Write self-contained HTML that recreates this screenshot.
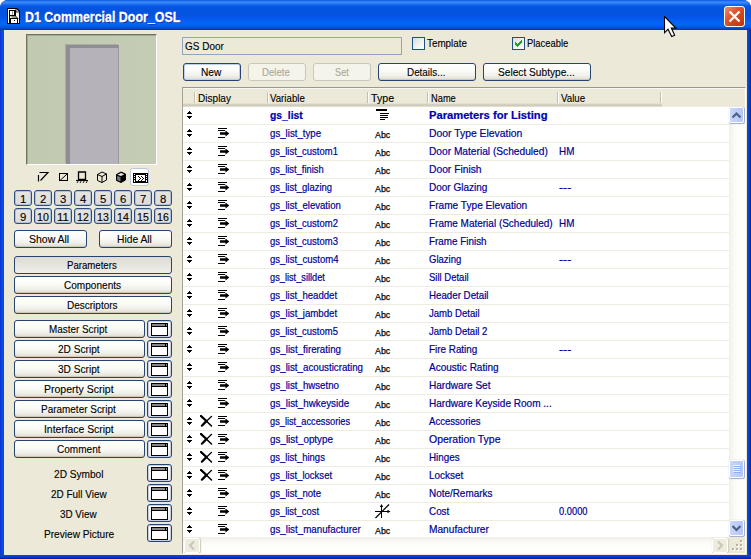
<!DOCTYPE html>
<html><head><meta charset="utf-8"><title>D1 Commercial Door_OSL</title>
<style>
*{box-sizing:border-box;margin:0;padding:0}
html,body{width:751px;height:559px;overflow:hidden;background:#fff}
body{font-family:"Liberation Sans",sans-serif;font-size:11px;color:#000;position:relative}
.a{position:absolute}
.t{position:absolute;white-space:nowrap;line-height:14px;height:14px;transform-origin:0 50%;font-size:10.5px;-webkit-text-stroke:0.12px currentColor}
.nv{-webkit-text-stroke:0.2px currentColor}
.nv{color:#000098}
#win{left:0;top:0;width:751px;height:559px;border-radius:8px 8px 0 0;background:#0A44D0;overflow:hidden}
#title{left:0;top:0;width:751px;height:30px;background:linear-gradient(to bottom,#0A58DA 0,#2573EE 1px,#3C8DF8 2px,#2C7CF4 3.5px,#0F62EE 5px,#0555E0 7px,#0353DE 14px,#0556EA 18px,#0565F4 22px,#0563F2 25px,#0558E4 27px,#0846CC 28.5px,#0432B0 30px)}
#frameL{left:0;top:30px;width:4px;height:529px;background:linear-gradient(to right,#0830CC,#0A48E2 40%,#0A4CE6)}
#frameR{left:747px;top:30px;width:4px;height:529px;background:linear-gradient(to right,#0C50DC,#0840C8 50%,#02259E)}
#frameB{left:0;top:555px;width:751px;height:4px;background:linear-gradient(to bottom,#0A48E2,#0838C8 50%,#02209C)}
#client{left:4px;top:30px;width:743px;height:525px;background:#ECE9D8}
.btn{position:absolute;height:18px;border:1px solid #25446F;border-radius:3px;background:linear-gradient(to bottom,#FFFFFF 0%,#FAFAF7 45%,#F0EFE8 75%,#DEDACC 100%);box-shadow:inset 0 -1px 0 #CDC9BA}
.btn.dis{border-color:#C9C7BA;background:#F5F4EA;box-shadow:none}
.btn.on{background:linear-gradient(to bottom,#DDDBD3 0%,#E5E3DD 45%,#EFEEE9 100%);box-shadow:none}
.nb{position:absolute;width:18px;height:16px;border:1px solid #2E4C7C;border-radius:3px;background:linear-gradient(to bottom,#E6E5E0,#DDDCD6);box-shadow:inset 0 0 0 1px #B4C0D6}
.ib{position:absolute;width:25px;height:18px;border:1px solid #25446F;border-radius:3px;background:linear-gradient(to bottom,#FFFFFF,#ECEADF);box-shadow:inset 0 0 0 1px #C6D0E4}
.ib i{position:absolute;left:3px;top:2px;width:17px;height:13px;border:1px solid #000;background:linear-gradient(to bottom,#858585 0,#858585 2px,#000 2px,#000 3px,#fff 3px)}
.ib b{position:absolute;left:17px;top:3px;width:1px;height:2px;background:#000}
#tbl{left:182px;top:87px;width:564px;height:467px;border-left:1px solid #A5A395;border-top:1px solid #9A988C;border-right:1px solid #fff;border-bottom:1px solid #fff;background:#fff;overflow:hidden}
#hdr{left:0;top:0;width:479px;height:19px;background:linear-gradient(to bottom,#F7F6F0 0,#F7F6F0 1px,#ECE9D8 1px,#ECE9D8 15px,#DDD9C8 16px,#CBC7B8 17px,#D6D2C2 18px,#E8E6DC 19px)}
.hs{position:absolute;top:4px;width:2px;height:11px;border-left:1px solid #C2BFAF;border-right:1px solid #fff}
.rl{position:absolute;left:0;width:546px;height:1px;background:#EDEBE2}
</style></head><body>
<div id="win" class="a">
<div id="title" class="a"></div>
<span class="t" style="left:25px;top:8px;line-height:18px;height:18px;font-size:14.5px;-webkit-text-stroke:0.3px #fff;font-weight:bold;color:#fff;text-shadow:1px 1px 0 #0A2A9A;transform:scaleX(0.8565)">D1 Commercial Door_OSL</span>
<svg class="a" style="left:7px;top:8px" width="13" height="16" viewBox="0 0 13 16"><path d="M0 0H10L13 3V16H0Z" fill="#000"/><path d="M1 1H9.300L12 3.700V15H1Z" fill="#fff"/><path d="M9 1V4H12" fill="none" stroke="#000" stroke-width="0.800"/><g shape-rendering="crispEdges"><rect x="2" y="2" width="7" height="6" fill="#000"/><rect x="3" y="3" width="4" height="4" fill="#fff"/><rect x="5" y="3" width="1" height="4" fill="#999"/><rect x="2" y="8" width="1" height="3" fill="#000"/><rect x="2" y="10" width="9" height="5" fill="#000"/><rect x="4" y="11" width="6" height="4" fill="#fff"/><rect x="7" y="12" width="1" height="1" fill="#000"/></g><path d="M3 8H8L10.500 10H5.500Z" fill="#8C9A84"/><path d="M8 7.500L11 10.500" stroke="#000" stroke-width="0.900"/></svg>
<div class="a" style="left:724px;top:6px;width:21px;height:21px;border:1px solid #fff;border-radius:3px;background:linear-gradient(135deg,#EE8C6E 0%,#E0532C 40%,#CC3F14 75%,#B8340E 100%)"><svg class="a" style="left:3px;top:3px" width="13" height="13" viewBox="0 0 13 13"><path d="M1.5 1.5L11.5 11.5M11.5 1.500L1.500 11.500" stroke="#fff" stroke-width="2.3"/></svg></div>
<div id="client" class="a"></div><div id="frameL" class="a"></div><div id="frameR" class="a"></div><div id="frameB" class="a"></div>
<div class="a" style="left:26px;top:34px;width:131px;height:131px;border:1px solid #6E745E;border-right-color:#fff;border-bottom-color:#fff;background:linear-gradient(to right,#C2C9B1,#C5CCB5);box-shadow:inset 1px 1px 0 #A2A992"><div class="a" style="left:39px;top:10px;width:53px;height:119px;background:#B5B3B9;border-left:4px solid #908E94;border-top:3px solid #908E94;border-right:1px solid #9C9AA0;box-shadow:-1px -1px 0 #A9ABA2"></div></div>
<svg class="a" style="left:36px;top:170px" width="92" height="16" viewBox="0 0 92 16"><path d="M2.500 5V11.500 M3.500 2.500H12 L4.500 10.500" stroke="#000" stroke-width="1.150" fill="none"/><rect x="23.500" y="3.500" width="8" height="7" fill="none" stroke="#000"/><path d="M24 10.500L31 4" stroke="#000"/><path d="M42.500 2V9.500H49.500V2Z" fill="none" stroke="#000" stroke-width="1.300"/><path d="M40 10.500H52" stroke="#000"/><path d="M41 13L42.200 11M44 13L45.200 11M47 13L48.200 11M50 13L51.200 11" stroke="#000" stroke-width="0.900"/><path d="M61.500 4.500L66 2L70.500 4V10L66 12.500L61.500 10.500Z M61.500 4.500L66 6.500L70.500 4 M66 6.500V12.500" fill="none" stroke="#000"/><path d="M80.500 4.500L85 2L89.500 4V10L85 12.500L80.500 10.500Z" fill="#000" stroke="#000"/><path d="M81.500 4.700L85 6.100L88.300 4.300L85 3Z" fill="#E8E8E8"/><path d="M81.200 5.800L84.500 7.200V11.500L81.200 10Z" fill="#777"/></svg>
<div class="a" style="left:130px;top:168px;width:19px;height:18px;border:1px solid #B9C6DE;border-radius:3px;background:#fff"><svg class="a" style="left:2px;top:4px" width="15" height="10" viewBox="0 0 15 10" shape-rendering="crispEdges"><rect x="0" y="0" width="15" height="10" fill="#000"/><rect x="3" y="2" width="9" height="6" fill="#fff"/><path d="M1 1h1v1H1ZM1 3h1v1H1ZM1 5h1v1H1ZM1 7h1v2H1ZM13 1h1v1h-1ZM13 3h1v1h-1ZM13 5h1v1h-1ZM13 7h1v2h-1Z" fill="#fff"/><path d="M5 3h1v1h1v1h1v1H7v1H6v1H5V7h1V6h1V5H6V4H5Z M8 3h1v1h1v1h1v1h-1v1H9v1H8V7h1V6h1V5H9V4H8Z" fill="#000"/></svg></div>
<div class="nb" style="left:14px;top:190px"></div>
<span class="t " style="left:19.8px;top:192px;transform:scaleX(1.0781);">1</span>
<div class="nb" style="left:34px;top:190px"></div>
<span class="t " style="left:39.8px;top:192px;transform:scaleX(1.0781);">2</span>
<div class="nb" style="left:54px;top:190px"></div>
<span class="t " style="left:59.8px;top:192px;transform:scaleX(1.0781);">3</span>
<div class="nb" style="left:74px;top:190px"></div>
<span class="t " style="left:79.8px;top:192px;transform:scaleX(1.0781);">4</span>
<div class="nb" style="left:94px;top:190px"></div>
<span class="t " style="left:99.8px;top:192px;transform:scaleX(1.0781);">5</span>
<div class="nb" style="left:114px;top:190px"></div>
<span class="t " style="left:119.8px;top:192px;transform:scaleX(1.0781);">6</span>
<div class="nb" style="left:134px;top:190px"></div>
<span class="t " style="left:139.8px;top:192px;transform:scaleX(1.0781);">7</span>
<div class="nb" style="left:154px;top:190px"></div>
<span class="t " style="left:159.8px;top:192px;transform:scaleX(1.0781);">8</span>
<div class="nb" style="left:14px;top:208px"></div>
<span class="t " style="left:19.8px;top:210px;transform:scaleX(1.0781);">9</span>
<div class="nb" style="left:34px;top:208px"></div>
<span class="t " style="left:37.0px;top:210px;transform:scaleX(1.0096);">10</span>
<div class="nb" style="left:54px;top:208px"></div>
<span class="t " style="left:57.0px;top:210px;transform:scaleX(1.0819);">11</span>
<div class="nb" style="left:74px;top:208px"></div>
<span class="t " style="left:77.0px;top:210px;transform:scaleX(1.0096);">12</span>
<div class="nb" style="left:94px;top:208px"></div>
<span class="t " style="left:97.0px;top:210px;transform:scaleX(1.0096);">13</span>
<div class="nb" style="left:114px;top:208px"></div>
<span class="t " style="left:117.0px;top:210px;transform:scaleX(1.0096);">14</span>
<div class="nb" style="left:134px;top:208px"></div>
<span class="t " style="left:137.0px;top:210px;transform:scaleX(1.0096);">15</span>
<div class="nb" style="left:154px;top:208px"></div>
<span class="t " style="left:157.0px;top:210px;transform:scaleX(1.0096);">16</span>
<div class="btn" style="left:14px;top:230px;width:73px"></div><span class="t " style="left:29.4px;top:232px;transform:scaleX(0.9980);">Show All</span>
<div class="btn" style="left:99px;top:230px;width:73px"></div><span class="t " style="left:117.0px;top:232px;transform:scaleX(0.9773);">Hide All</span>
<div class="btn on" style="left:14px;top:256px;width:158px"></div><span class="t " style="left:66.9px;top:258px;transform:scaleX(0.9156);">Parameters</span>
<div class="btn" style="left:14px;top:276px;width:158px"></div><span class="t " style="left:63.6px;top:278px;transform:scaleX(0.9589);">Components</span>
<div class="btn" style="left:14px;top:296px;width:158px"></div><span class="t " style="left:66.9px;top:298px;transform:scaleX(0.9528);">Descriptors</span>
<div class="btn" style="left:14px;top:320px;width:131px"></div><span class="t " style="left:49.0px;top:322px;transform:scaleX(0.9408);">Master Script</span><div class="ib" style="left:147px;top:320px"><i></i><b></b></div>
<div class="btn" style="left:14px;top:340px;width:131px"></div><span class="t " style="left:57.9px;top:342px;transform:scaleX(0.9632);">2D Script</span><div class="ib" style="left:147px;top:340px"><i></i><b></b></div>
<div class="btn" style="left:14px;top:360px;width:131px"></div><span class="t " style="left:57.9px;top:362px;transform:scaleX(0.9632);">3D Script</span><div class="ib" style="left:147px;top:360px"><i></i><b></b></div>
<div class="btn" style="left:14px;top:380px;width:131px"></div><span class="t " style="left:43.9px;top:382px;transform:scaleX(1.0021);">Property Script</span><div class="ib" style="left:147px;top:380px"><i></i><b></b></div>
<div class="btn" style="left:14px;top:400px;width:131px"></div><span class="t " style="left:41.0px;top:402px;transform:scaleX(0.9482);">Parameter Script</span><div class="ib" style="left:147px;top:400px"><i></i><b></b></div>
<div class="btn" style="left:14px;top:420px;width:131px"></div><span class="t " style="left:43.9px;top:422px;transform:scaleX(0.9855);">Interface Script</span><div class="ib" style="left:147px;top:420px"><i></i><b></b></div>
<div class="btn" style="left:14px;top:440px;width:131px"></div><span class="t " style="left:57.2px;top:442px;transform:scaleX(0.9579);">Comment</span><div class="ib" style="left:147px;top:440px"><i></i><b></b></div>
<span class="t " style="left:54.1px;top:467px;transform:scaleX(0.9638);">2D Symbol</span><div class="ib" style="left:147px;top:464px"><i></i><b></b></div>
<span class="t " style="left:50.9px;top:487px;transform:scaleX(0.9464);">2D Full View</span><div class="ib" style="left:147px;top:484px"><i></i><b></b></div>
<span class="t " style="left:59.7px;top:507px;transform:scaleX(0.9403);">3D View</span><div class="ib" style="left:147px;top:504px"><i></i><b></b></div>
<span class="t " style="left:43.5px;top:527px;transform:scaleX(0.9623);">Preview Picture</span><div class="ib" style="left:147px;top:524px"><i></i><b></b></div>
<div class="a" style="left:182px;top:37px;width:220px;height:18px;border:1px solid #8FA6BE;background:#ECE9D8"></div><span class="t " style="left:185.4px;top:39px;transform:scaleX(0.9496);">GS Door</span>
<div class="a" style="left:412px;top:37px;width:13px;height:13px;border:1px solid #1C5180;background:linear-gradient(135deg,#DCDCD5,#F4F4F0 60%,#fff)"></div><span class="t " style="left:426.8px;top:36px;transform:scaleX(0.9388);">Template</span>
<div class="a" style="left:512px;top:37px;width:13px;height:13px;border:1px solid #1C5180;background:linear-gradient(135deg,#DCDCD5,#F4F4F0 60%,#fff)"><svg class="a" style="left:2px;top:2px" width="7" height="7" viewBox="0 0 7 7" shape-rendering="crispEdges"><path d="M0 2h1v1h1v1h1V3h1V2h1V1h1V0h1v3H6v1H5v1H4v1H3v1H2V6H1V5H0Z" fill="#21A121"/></svg></div><span class="t " style="left:526.6px;top:36px;transform:scaleX(0.8932);">Placeable</span>
<div class="btn" style="left:183px;top:63px;width:58px;box-shadow:inset 0 0 0 1px #BCD0F4"></div><span class="t " style="left:201.3px;top:65px;transform:scaleX(0.9659);">New</span>
<div class="btn dis" style="left:248px;top:63px;width:58px"></div><span class="t " style="left:262.1px;top:65px;transform:scaleX(0.9190);color:#ACA899;">Delete</span>
<div class="btn dis" style="left:313px;top:63px;width:58px"></div><span class="t " style="left:334.8px;top:65px;transform:scaleX(0.8753);color:#ACA899;">Set</span>
<div class="btn" style="left:378px;top:63px;width:98px"></div><span class="t " style="left:406.9px;top:65px;transform:scaleX(0.9398);">Details...</span>
<div class="btn" style="left:483px;top:63px;width:108px"></div><span class="t " style="left:498.1px;top:65px;transform:scaleX(0.9674);">Select Subtype...</span>
<div id="tbl" class="a">
<div class="a" style="left:479px;top:0;width:83px;height:19px;background:linear-gradient(to bottom,#F7F6F0 0,#F7F6F0 1px,#ECE9D8 1px,#ECE9D8 18px,#F4F3EC 19px)"></div>
<div id="hdr" class="a">
<div class="hs" style="left:11px"></div>
<div class="hs" style="left:84px"></div>
<div class="hs" style="left:184px"></div>
<div class="hs" style="left:244px"></div>
<div class="hs" style="left:374px"></div>
<div class="hs" style="left:477px"></div>
</div>
<span class="t " style="left:14.5px;top:3px;transform:scaleX(0.9583);">Display</span>
<span class="t " style="left:87.2px;top:3px;transform:scaleX(0.9219);">Variable</span>
<span class="t " style="left:187.7px;top:3px;transform:scaleX(1.0147);">Type</span>
<span class="t " style="left:247.6px;top:3px;transform:scaleX(0.8852);">Name</span>
<span class="t " style="left:377.5px;top:3px;transform:scaleX(0.9280);">Value</span>
<svg class="a" style="left:4px;top:23px" width="5" height="8" viewBox="0 0 5 8" shape-rendering="crispEdges"><path d="M2 0h1v1h1v1h1v1H0V2h1V1h1Z M0 5h5v1H4v1H3v1H2V7H1V6H0Z" fill="#000"/></svg>
<span class="t nv" style="left:86.5px;top:20px;transform:scaleX(0.9860);font-weight:bold;color:#0000AE;">gs_list</span>
<svg class="a" style="left:193px;top:21px" width="14" height="11" viewBox="0 0 14 11" shape-rendering="crispEdges"><path d="M0 0h11v2H0Z M4 4h9v1H4Z M4 6h8v1H4Z M4 8h8v1H4Z M4 10h5v1H4Z" fill="#000"/></svg>
<span class="t nv" style="left:246.1px;top:20px;transform:scaleX(1.0632);font-weight:bold;color:#0000AE;">Parameters for Listing</span>
<div class="rl" style="top:36px"></div>
<svg class="a" style="left:4px;top:41px" width="5" height="8" viewBox="0 0 5 8" shape-rendering="crispEdges"><path d="M2 0h1v1h1v1h1v1H0V2h1V1h1Z M0 5h5v1H4v1H3v1H2V7H1V6H0Z" fill="#000"/></svg>
<svg class="a" style="left:35px;top:40px" width="12" height="10" viewBox="0 0 12 10"><path d="M0 0h9v1H0Z M0 2h7v1H0Z M0 9h7v1H0Z" fill="#000"/><path d="M2 4.300h5.500v-1.700L11.300 5.500 7.500 8.400V6.700H2Z" fill="#000"/></svg>
<span class="t nv" style="left:86.5px;top:38px;transform:scaleX(0.9215);">gs_list_type</span>
<span class="t " style="left:192.1px;top:40px;transform:scaleX(0.9282);font-size:9.5px;-webkit-text-stroke:0.25px #000;">Abc</span>
<span class="t nv" style="left:246.1px;top:38px;transform:scaleX(0.9886);">Door Type Elevation</span>
<div class="rl" style="top:54px"></div>
<svg class="a" style="left:4px;top:59px" width="5" height="8" viewBox="0 0 5 8" shape-rendering="crispEdges"><path d="M2 0h1v1h1v1h1v1H0V2h1V1h1Z M0 5h5v1H4v1H3v1H2V7H1V6H0Z" fill="#000"/></svg>
<svg class="a" style="left:35px;top:58px" width="12" height="10" viewBox="0 0 12 10"><path d="M0 0h9v1H0Z M0 2h7v1H0Z M0 9h7v1H0Z" fill="#000"/><path d="M2 4.300h5.500v-1.700L11.300 5.500 7.500 8.400V6.700H2Z" fill="#000"/></svg>
<span class="t nv" style="left:86.5px;top:56px;transform:scaleX(0.9018);">gs_list_custom1</span>
<span class="t " style="left:192.1px;top:58px;transform:scaleX(0.9282);font-size:9.5px;-webkit-text-stroke:0.25px #000;">Abc</span>
<span class="t nv" style="left:246.1px;top:56px;transform:scaleX(0.9693);">Door Material (Scheduled)</span>
<span class="t nv" style="left:376.4px;top:56px;transform:scaleX(0.9423);">HM</span>
<div class="rl" style="top:72px"></div>
<svg class="a" style="left:4px;top:77px" width="5" height="8" viewBox="0 0 5 8" shape-rendering="crispEdges"><path d="M2 0h1v1h1v1h1v1H0V2h1V1h1Z M0 5h5v1H4v1H3v1H2V7H1V6H0Z" fill="#000"/></svg>
<svg class="a" style="left:35px;top:76px" width="12" height="10" viewBox="0 0 12 10"><path d="M0 0h9v1H0Z M0 2h7v1H0Z M0 9h7v1H0Z" fill="#000"/><path d="M2 4.300h5.500v-1.700L11.300 5.500 7.500 8.400V6.700H2Z" fill="#000"/></svg>
<span class="t nv" style="left:86.5px;top:74px;transform:scaleX(0.8948);">gs_list_finish</span>
<span class="t " style="left:192.1px;top:76px;transform:scaleX(0.9282);font-size:9.5px;-webkit-text-stroke:0.25px #000;">Abc</span>
<span class="t nv" style="left:246.1px;top:74px;transform:scaleX(0.9797);">Door Finish</span>
<div class="rl" style="top:90px"></div>
<svg class="a" style="left:4px;top:95px" width="5" height="8" viewBox="0 0 5 8" shape-rendering="crispEdges"><path d="M2 0h1v1h1v1h1v1H0V2h1V1h1Z M0 5h5v1H4v1H3v1H2V7H1V6H0Z" fill="#000"/></svg>
<svg class="a" style="left:35px;top:94px" width="12" height="10" viewBox="0 0 12 10"><path d="M0 0h9v1H0Z M0 2h7v1H0Z M0 9h7v1H0Z" fill="#000"/><path d="M2 4.300h5.500v-1.700L11.300 5.500 7.500 8.400V6.700H2Z" fill="#000"/></svg>
<span class="t nv" style="left:86.5px;top:92px;transform:scaleX(0.9014);">gs_list_glazing</span>
<span class="t " style="left:192.1px;top:94px;transform:scaleX(0.9282);font-size:9.5px;-webkit-text-stroke:0.25px #000;">Abc</span>
<span class="t nv" style="left:246.1px;top:92px;transform:scaleX(0.9530);">Door Glazing</span>
<span class="t nv" style="left:376.4px;top:92px;transform:scaleX(1.1619);">---</span>
<div class="rl" style="top:108px"></div>
<svg class="a" style="left:4px;top:113px" width="5" height="8" viewBox="0 0 5 8" shape-rendering="crispEdges"><path d="M2 0h1v1h1v1h1v1H0V2h1V1h1Z M0 5h5v1H4v1H3v1H2V7H1V6H0Z" fill="#000"/></svg>
<svg class="a" style="left:35px;top:112px" width="12" height="10" viewBox="0 0 12 10"><path d="M0 0h9v1H0Z M0 2h7v1H0Z M0 9h7v1H0Z" fill="#000"/><path d="M2 4.300h5.500v-1.700L11.300 5.500 7.500 8.400V6.700H2Z" fill="#000"/></svg>
<span class="t nv" style="left:86.5px;top:110px;transform:scaleX(0.9119);">gs_list_elevation</span>
<span class="t " style="left:192.1px;top:112px;transform:scaleX(0.9282);font-size:9.5px;-webkit-text-stroke:0.25px #000;">Abc</span>
<span class="t nv" style="left:246.1px;top:110px;transform:scaleX(0.9632);">Frame Type Elevation</span>
<div class="rl" style="top:126px"></div>
<svg class="a" style="left:4px;top:131px" width="5" height="8" viewBox="0 0 5 8" shape-rendering="crispEdges"><path d="M2 0h1v1h1v1h1v1H0V2h1V1h1Z M0 5h5v1H4v1H3v1H2V7H1V6H0Z" fill="#000"/></svg>
<svg class="a" style="left:35px;top:130px" width="12" height="10" viewBox="0 0 12 10"><path d="M0 0h9v1H0Z M0 2h7v1H0Z M0 9h7v1H0Z" fill="#000"/><path d="M2 4.300h5.500v-1.700L11.300 5.500 7.500 8.400V6.700H2Z" fill="#000"/></svg>
<span class="t nv" style="left:86.5px;top:128px;transform:scaleX(0.9018);">gs_list_custom2</span>
<span class="t " style="left:192.1px;top:130px;transform:scaleX(0.9282);font-size:9.5px;-webkit-text-stroke:0.25px #000;">Abc</span>
<span class="t nv" style="left:246.1px;top:128px;transform:scaleX(0.9505);">Frame Material (Scheduled)</span>
<span class="t nv" style="left:376.4px;top:128px;transform:scaleX(0.9423);">HM</span>
<div class="rl" style="top:144px"></div>
<svg class="a" style="left:4px;top:149px" width="5" height="8" viewBox="0 0 5 8" shape-rendering="crispEdges"><path d="M2 0h1v1h1v1h1v1H0V2h1V1h1Z M0 5h5v1H4v1H3v1H2V7H1V6H0Z" fill="#000"/></svg>
<svg class="a" style="left:35px;top:148px" width="12" height="10" viewBox="0 0 12 10"><path d="M0 0h9v1H0Z M0 2h7v1H0Z M0 9h7v1H0Z" fill="#000"/><path d="M2 4.300h5.500v-1.700L11.300 5.500 7.500 8.400V6.700H2Z" fill="#000"/></svg>
<span class="t nv" style="left:86.5px;top:146px;transform:scaleX(0.9018);">gs_list_custom3</span>
<span class="t " style="left:192.1px;top:148px;transform:scaleX(0.9282);font-size:9.5px;-webkit-text-stroke:0.25px #000;">Abc</span>
<span class="t nv" style="left:246.1px;top:146px;transform:scaleX(0.9402);">Frame Finish</span>
<div class="rl" style="top:162px"></div>
<svg class="a" style="left:4px;top:167px" width="5" height="8" viewBox="0 0 5 8" shape-rendering="crispEdges"><path d="M2 0h1v1h1v1h1v1H0V2h1V1h1Z M0 5h5v1H4v1H3v1H2V7H1V6H0Z" fill="#000"/></svg>
<svg class="a" style="left:35px;top:166px" width="12" height="10" viewBox="0 0 12 10"><path d="M0 0h9v1H0Z M0 2h7v1H0Z M0 9h7v1H0Z" fill="#000"/><path d="M2 4.300h5.500v-1.700L11.300 5.500 7.500 8.400V6.700H2Z" fill="#000"/></svg>
<span class="t nv" style="left:86.5px;top:164px;transform:scaleX(0.9097);">gs_list_custom4</span>
<span class="t " style="left:192.1px;top:166px;transform:scaleX(0.9282);font-size:9.5px;-webkit-text-stroke:0.25px #000;">Abc</span>
<span class="t nv" style="left:246.1px;top:164px;transform:scaleX(0.9071);">Glazing</span>
<span class="t nv" style="left:376.4px;top:164px;transform:scaleX(1.1619);">---</span>
<div class="rl" style="top:180px"></div>
<svg class="a" style="left:4px;top:185px" width="5" height="8" viewBox="0 0 5 8" shape-rendering="crispEdges"><path d="M2 0h1v1h1v1h1v1H0V2h1V1h1Z M0 5h5v1H4v1H3v1H2V7H1V6H0Z" fill="#000"/></svg>
<svg class="a" style="left:35px;top:184px" width="12" height="10" viewBox="0 0 12 10"><path d="M0 0h9v1H0Z M0 2h7v1H0Z M0 9h7v1H0Z" fill="#000"/><path d="M2 4.300h5.500v-1.700L11.300 5.500 7.500 8.400V6.700H2Z" fill="#000"/></svg>
<span class="t nv" style="left:86.5px;top:182px;transform:scaleX(0.8791);">gs_list_silldet</span>
<span class="t " style="left:192.1px;top:184px;transform:scaleX(0.9282);font-size:9.5px;-webkit-text-stroke:0.25px #000;">Abc</span>
<span class="t nv" style="left:246.1px;top:182px;transform:scaleX(0.9048);">Sill Detail</span>
<div class="rl" style="top:198px"></div>
<svg class="a" style="left:4px;top:203px" width="5" height="8" viewBox="0 0 5 8" shape-rendering="crispEdges"><path d="M2 0h1v1h1v1h1v1H0V2h1V1h1Z M0 5h5v1H4v1H3v1H2V7H1V6H0Z" fill="#000"/></svg>
<svg class="a" style="left:35px;top:202px" width="12" height="10" viewBox="0 0 12 10"><path d="M0 0h9v1H0Z M0 2h7v1H0Z M0 9h7v1H0Z" fill="#000"/><path d="M2 4.300h5.500v-1.700L11.300 5.500 7.500 8.400V6.700H2Z" fill="#000"/></svg>
<span class="t nv" style="left:86.5px;top:200px;transform:scaleX(0.9121);">gs_list_headdet</span>
<span class="t " style="left:192.1px;top:202px;transform:scaleX(0.9282);font-size:9.5px;-webkit-text-stroke:0.25px #000;">Abc</span>
<span class="t nv" style="left:246.1px;top:200px;transform:scaleX(0.9267);">Header Detail</span>
<div class="rl" style="top:216px"></div>
<svg class="a" style="left:4px;top:221px" width="5" height="8" viewBox="0 0 5 8" shape-rendering="crispEdges"><path d="M2 0h1v1h1v1h1v1H0V2h1V1h1Z M0 5h5v1H4v1H3v1H2V7H1V6H0Z" fill="#000"/></svg>
<svg class="a" style="left:35px;top:220px" width="12" height="10" viewBox="0 0 12 10"><path d="M0 0h9v1H0Z M0 2h7v1H0Z M0 9h7v1H0Z" fill="#000"/><path d="M2 4.300h5.500v-1.700L11.300 5.500 7.500 8.400V6.700H2Z" fill="#000"/></svg>
<span class="t nv" style="left:86.5px;top:218px;transform:scaleX(0.9196);">gs_list_jambdet</span>
<span class="t " style="left:192.1px;top:220px;transform:scaleX(0.9282);font-size:9.5px;-webkit-text-stroke:0.25px #000;">Abc</span>
<span class="t nv" style="left:246.1px;top:218px;transform:scaleX(0.9125);">Jamb Detail</span>
<div class="rl" style="top:234px"></div>
<svg class="a" style="left:4px;top:239px" width="5" height="8" viewBox="0 0 5 8" shape-rendering="crispEdges"><path d="M2 0h1v1h1v1h1v1H0V2h1V1h1Z M0 5h5v1H4v1H3v1H2V7H1V6H0Z" fill="#000"/></svg>
<svg class="a" style="left:35px;top:238px" width="12" height="10" viewBox="0 0 12 10"><path d="M0 0h9v1H0Z M0 2h7v1H0Z M0 9h7v1H0Z" fill="#000"/><path d="M2 4.300h5.500v-1.700L11.300 5.500 7.500 8.400V6.700H2Z" fill="#000"/></svg>
<span class="t nv" style="left:86.5px;top:236px;transform:scaleX(0.9018);">gs_list_custom5</span>
<span class="t " style="left:192.1px;top:238px;transform:scaleX(0.9282);font-size:9.5px;-webkit-text-stroke:0.25px #000;">Abc</span>
<span class="t nv" style="left:246.1px;top:236px;transform:scaleX(0.9096);">Jamb Detail 2</span>
<div class="rl" style="top:252px"></div>
<svg class="a" style="left:4px;top:257px" width="5" height="8" viewBox="0 0 5 8" shape-rendering="crispEdges"><path d="M2 0h1v1h1v1h1v1H0V2h1V1h1Z M0 5h5v1H4v1H3v1H2V7H1V6H0Z" fill="#000"/></svg>
<svg class="a" style="left:35px;top:256px" width="12" height="10" viewBox="0 0 12 10"><path d="M0 0h9v1H0Z M0 2h7v1H0Z M0 9h7v1H0Z" fill="#000"/><path d="M2 4.300h5.500v-1.700L11.300 5.500 7.500 8.400V6.700H2Z" fill="#000"/></svg>
<span class="t nv" style="left:86.5px;top:254px;transform:scaleX(0.9287);">gs_list_firerating</span>
<span class="t " style="left:192.1px;top:256px;transform:scaleX(0.9282);font-size:9.5px;-webkit-text-stroke:0.25px #000;">Abc</span>
<span class="t nv" style="left:246.1px;top:254px;transform:scaleX(0.9404);">Fire Rating</span>
<span class="t nv" style="left:376.4px;top:254px;transform:scaleX(1.1619);">---</span>
<div class="rl" style="top:270px"></div>
<svg class="a" style="left:4px;top:275px" width="5" height="8" viewBox="0 0 5 8" shape-rendering="crispEdges"><path d="M2 0h1v1h1v1h1v1H0V2h1V1h1Z M0 5h5v1H4v1H3v1H2V7H1V6H0Z" fill="#000"/></svg>
<svg class="a" style="left:35px;top:274px" width="12" height="10" viewBox="0 0 12 10"><path d="M0 0h9v1H0Z M0 2h7v1H0Z M0 9h7v1H0Z" fill="#000"/><path d="M2 4.300h5.500v-1.700L11.300 5.500 7.500 8.400V6.700H2Z" fill="#000"/></svg>
<span class="t nv" style="left:86.5px;top:272px;transform:scaleX(0.9264);">gs_list_acousticrating</span>
<span class="t " style="left:192.1px;top:274px;transform:scaleX(0.9282);font-size:9.5px;-webkit-text-stroke:0.25px #000;">Abc</span>
<span class="t nv" style="left:246.1px;top:272px;transform:scaleX(0.9540);">Acoustic Rating</span>
<div class="rl" style="top:288px"></div>
<svg class="a" style="left:4px;top:293px" width="5" height="8" viewBox="0 0 5 8" shape-rendering="crispEdges"><path d="M2 0h1v1h1v1h1v1H0V2h1V1h1Z M0 5h5v1H4v1H3v1H2V7H1V6H0Z" fill="#000"/></svg>
<svg class="a" style="left:35px;top:292px" width="12" height="10" viewBox="0 0 12 10"><path d="M0 0h9v1H0Z M0 2h7v1H0Z M0 9h7v1H0Z" fill="#000"/><path d="M2 4.300h5.500v-1.700L11.300 5.500 7.500 8.400V6.700H2Z" fill="#000"/></svg>
<span class="t nv" style="left:86.5px;top:290px;transform:scaleX(0.9235);">gs_list_hwsetno</span>
<span class="t " style="left:192.1px;top:292px;transform:scaleX(0.9282);font-size:9.5px;-webkit-text-stroke:0.25px #000;">Abc</span>
<span class="t nv" style="left:246.1px;top:290px;transform:scaleX(0.9579);">Hardware Set</span>
<div class="rl" style="top:306px"></div>
<svg class="a" style="left:4px;top:311px" width="5" height="8" viewBox="0 0 5 8" shape-rendering="crispEdges"><path d="M2 0h1v1h1v1h1v1H0V2h1V1h1Z M0 5h5v1H4v1H3v1H2V7H1V6H0Z" fill="#000"/></svg>
<svg class="a" style="left:35px;top:310px" width="12" height="10" viewBox="0 0 12 10"><path d="M0 0h9v1H0Z M0 2h7v1H0Z M0 9h7v1H0Z" fill="#000"/><path d="M2 4.300h5.500v-1.700L11.300 5.500 7.500 8.400V6.700H2Z" fill="#000"/></svg>
<span class="t nv" style="left:86.5px;top:308px;transform:scaleX(0.9345);">gs_list_hwkeyside</span>
<span class="t " style="left:192.1px;top:310px;transform:scaleX(0.9282);font-size:9.5px;-webkit-text-stroke:0.25px #000;">Abc</span>
<span class="t nv" style="left:246.1px;top:308px;transform:scaleX(0.9557);">Hardware Keyside Room ...</span>
<div class="rl" style="top:324px"></div>
<svg class="a" style="left:4px;top:329px" width="5" height="8" viewBox="0 0 5 8" shape-rendering="crispEdges"><path d="M2 0h1v1h1v1h1v1H0V2h1V1h1Z M0 5h5v1H4v1H3v1H2V7H1V6H0Z" fill="#000"/></svg>
<svg class="a" style="left:17px;top:327px" width="13" height="12" viewBox="0 0 13 13" preserveAspectRatio="none"><path d="M1 1 L11.5 12" stroke="#000" stroke-width="1.5" fill="none" stroke-linecap="round"/><path d="M1 1 L6.5 6.5" stroke="#000" stroke-width="2.2" fill="none" stroke-linecap="round"/><path d="M11.5 1.5 L2 11.5" stroke="#000" stroke-width="1.5" fill="none" stroke-linecap="round"/><path d="M6 7 L2 11.5" stroke="#000" stroke-width="2.4" fill="none" stroke-linecap="round"/></svg>
<svg class="a" style="left:35px;top:328px" width="12" height="10" viewBox="0 0 12 10"><path d="M0 0h9v1H0Z M0 2h7v1H0Z M0 9h7v1H0Z" fill="#000"/><path d="M2 4.300h5.500v-1.700L11.300 5.500 7.500 8.400V6.700H2Z" fill="#000"/></svg>
<span class="t nv" style="left:86.5px;top:326px;transform:scaleX(0.8798);">gs_list_accessories</span>
<span class="t " style="left:192.1px;top:328px;transform:scaleX(0.9282);font-size:9.5px;-webkit-text-stroke:0.25px #000;">Abc</span>
<span class="t nv" style="left:246.1px;top:326px;transform:scaleX(0.9115);">Accessories</span>
<div class="rl" style="top:342px"></div>
<svg class="a" style="left:4px;top:347px" width="5" height="8" viewBox="0 0 5 8" shape-rendering="crispEdges"><path d="M2 0h1v1h1v1h1v1H0V2h1V1h1Z M0 5h5v1H4v1H3v1H2V7H1V6H0Z" fill="#000"/></svg>
<svg class="a" style="left:17px;top:345px" width="13" height="12" viewBox="0 0 13 13" preserveAspectRatio="none"><path d="M1 1 L11.5 12" stroke="#000" stroke-width="1.5" fill="none" stroke-linecap="round"/><path d="M1 1 L6.5 6.5" stroke="#000" stroke-width="2.2" fill="none" stroke-linecap="round"/><path d="M11.5 1.5 L2 11.5" stroke="#000" stroke-width="1.5" fill="none" stroke-linecap="round"/><path d="M6 7 L2 11.5" stroke="#000" stroke-width="2.4" fill="none" stroke-linecap="round"/></svg>
<svg class="a" style="left:35px;top:346px" width="12" height="10" viewBox="0 0 12 10"><path d="M0 0h9v1H0Z M0 2h7v1H0Z M0 9h7v1H0Z" fill="#000"/><path d="M2 4.300h5.500v-1.700L11.300 5.500 7.500 8.400V6.700H2Z" fill="#000"/></svg>
<span class="t nv" style="left:86.5px;top:344px;transform:scaleX(0.9383);">gs_list_optype</span>
<span class="t " style="left:192.1px;top:346px;transform:scaleX(0.9282);font-size:9.5px;-webkit-text-stroke:0.25px #000;">Abc</span>
<span class="t nv" style="left:246.1px;top:344px;transform:scaleX(0.9985);">Operation Type</span>
<div class="rl" style="top:360px"></div>
<svg class="a" style="left:4px;top:365px" width="5" height="8" viewBox="0 0 5 8" shape-rendering="crispEdges"><path d="M2 0h1v1h1v1h1v1H0V2h1V1h1Z M0 5h5v1H4v1H3v1H2V7H1V6H0Z" fill="#000"/></svg>
<svg class="a" style="left:17px;top:363px" width="13" height="12" viewBox="0 0 13 13" preserveAspectRatio="none"><path d="M1 1 L11.5 12" stroke="#000" stroke-width="1.5" fill="none" stroke-linecap="round"/><path d="M1 1 L6.5 6.5" stroke="#000" stroke-width="2.2" fill="none" stroke-linecap="round"/><path d="M11.5 1.5 L2 11.5" stroke="#000" stroke-width="1.5" fill="none" stroke-linecap="round"/><path d="M6 7 L2 11.5" stroke="#000" stroke-width="2.4" fill="none" stroke-linecap="round"/></svg>
<svg class="a" style="left:35px;top:364px" width="12" height="10" viewBox="0 0 12 10"><path d="M0 0h9v1H0Z M0 2h7v1H0Z M0 9h7v1H0Z" fill="#000"/><path d="M2 4.300h5.500v-1.700L11.300 5.500 7.500 8.400V6.700H2Z" fill="#000"/></svg>
<span class="t nv" style="left:86.5px;top:362px;transform:scaleX(0.9044);">gs_list_hings</span>
<span class="t " style="left:192.1px;top:364px;transform:scaleX(0.9282);font-size:9.5px;-webkit-text-stroke:0.25px #000;">Abc</span>
<span class="t nv" style="left:246.1px;top:362px;transform:scaleX(0.9361);">Hinges</span>
<div class="rl" style="top:378px"></div>
<svg class="a" style="left:4px;top:383px" width="5" height="8" viewBox="0 0 5 8" shape-rendering="crispEdges"><path d="M2 0h1v1h1v1h1v1H0V2h1V1h1Z M0 5h5v1H4v1H3v1H2V7H1V6H0Z" fill="#000"/></svg>
<svg class="a" style="left:17px;top:381px" width="13" height="12" viewBox="0 0 13 13" preserveAspectRatio="none"><path d="M1 1 L11.5 12" stroke="#000" stroke-width="1.5" fill="none" stroke-linecap="round"/><path d="M1 1 L6.5 6.5" stroke="#000" stroke-width="2.2" fill="none" stroke-linecap="round"/><path d="M11.5 1.5 L2 11.5" stroke="#000" stroke-width="1.5" fill="none" stroke-linecap="round"/><path d="M6 7 L2 11.5" stroke="#000" stroke-width="2.4" fill="none" stroke-linecap="round"/></svg>
<svg class="a" style="left:35px;top:382px" width="12" height="10" viewBox="0 0 12 10"><path d="M0 0h9v1H0Z M0 2h7v1H0Z M0 9h7v1H0Z" fill="#000"/><path d="M2 4.300h5.500v-1.700L11.300 5.500 7.500 8.400V6.700H2Z" fill="#000"/></svg>
<span class="t nv" style="left:86.5px;top:380px;transform:scaleX(0.9095);">gs_list_lockset</span>
<span class="t " style="left:192.1px;top:382px;transform:scaleX(0.9282);font-size:9.5px;-webkit-text-stroke:0.25px #000;">Abc</span>
<span class="t nv" style="left:246.1px;top:380px;transform:scaleX(0.9451);">Lockset</span>
<div class="rl" style="top:396px"></div>
<svg class="a" style="left:4px;top:401px" width="5" height="8" viewBox="0 0 5 8" shape-rendering="crispEdges"><path d="M2 0h1v1h1v1h1v1H0V2h1V1h1Z M0 5h5v1H4v1H3v1H2V7H1V6H0Z" fill="#000"/></svg>
<svg class="a" style="left:35px;top:400px" width="12" height="10" viewBox="0 0 12 10"><path d="M0 0h9v1H0Z M0 2h7v1H0Z M0 9h7v1H0Z" fill="#000"/><path d="M2 4.300h5.500v-1.700L11.300 5.500 7.500 8.400V6.700H2Z" fill="#000"/></svg>
<span class="t nv" style="left:86.5px;top:398px;transform:scaleX(0.9117);">gs_list_note</span>
<span class="t " style="left:192.1px;top:400px;transform:scaleX(0.9282);font-size:9.5px;-webkit-text-stroke:0.25px #000;">Abc</span>
<span class="t nv" style="left:246.1px;top:398px;transform:scaleX(0.9447);">Note/Remarks</span>
<div class="rl" style="top:414px"></div>
<svg class="a" style="left:4px;top:419px" width="5" height="8" viewBox="0 0 5 8" shape-rendering="crispEdges"><path d="M2 0h1v1h1v1h1v1H0V2h1V1h1Z M0 5h5v1H4v1H3v1H2V7H1V6H0Z" fill="#000"/></svg>
<svg class="a" style="left:35px;top:418px" width="12" height="10" viewBox="0 0 12 10"><path d="M0 0h9v1H0Z M0 2h7v1H0Z M0 9h7v1H0Z" fill="#000"/><path d="M2 4.300h5.500v-1.700L11.300 5.500 7.500 8.400V6.700H2Z" fill="#000"/></svg>
<span class="t nv" style="left:86.5px;top:416px;transform:scaleX(0.8950);">gs_list_cost</span>
<svg class="a" style="left:192px;top:416px" width="16" height="15" viewBox="0 0 16 15"><path d="M0 7.500H14 M6.500 1V14" stroke="#000" stroke-width="1" fill="none"/><path d="M0.500 14 L14 0.500" stroke="#000" stroke-width="1.200" fill="none"/><path d="M15.5 7.5L12.5 5.8V9.2Z M6.5 0L4.8 3H8.2Z" fill="#000"/></svg>
<span class="t nv" style="left:246.1px;top:416px;transform:scaleX(0.9401);">Cost</span>
<span class="t nv" style="left:376.4px;top:416px;transform:scaleX(0.8872);">0.0000</span>
<div class="rl" style="top:432px"></div>
<svg class="a" style="left:4px;top:437px" width="5" height="8" viewBox="0 0 5 8" shape-rendering="crispEdges"><path d="M2 0h1v1h1v1h1v1H0V2h1V1h1Z M0 5h5v1H4v1H3v1H2V7H1V6H0Z" fill="#000"/></svg>
<svg class="a" style="left:35px;top:436px" width="12" height="10" viewBox="0 0 12 10"><path d="M0 0h9v1H0Z M0 2h7v1H0Z M0 9h7v1H0Z" fill="#000"/><path d="M2 4.300h5.500v-1.700L11.300 5.500 7.500 8.400V6.700H2Z" fill="#000"/></svg>
<span class="t nv" style="left:86.5px;top:434px;transform:scaleX(0.9306);">gs_list_manufacturer</span>
<span class="t " style="left:192.1px;top:436px;transform:scaleX(0.9282);font-size:9.5px;-webkit-text-stroke:0.25px #000;">Abc</span>
<span class="t nv" style="left:246.1px;top:434px;transform:scaleX(0.9681);">Manufacturer</span>
<div class="rl" style="top:450px"></div>
<div class="a" style="left:546px;top:19px;width:16px;height:430px;background:linear-gradient(to right,#F1EFE8,#FAF9F5 30%,#FEFEFB 60%,#FEFEFB)"></div>
<div class="a" style="left:546px;top:19px;width:15px;height:16px;border:1px solid #fff;border-radius:2px;background:linear-gradient(to right,#C8D6FB,#BDCCF8 60%,#B6C6F4);box-shadow:0.5px 0.5px 1px #9AA9D0"><svg class="a" style="left:1px;top:2px" width="11" height="10" viewBox="0 0 11 10"><path d="M1.500 7.500L5.500 3.500L9.500 7.500" stroke="#4D6185" stroke-width="2.2" fill="none"/></svg></div>
<div class="a" style="left:546px;top:432px;width:15px;height:16px;border:1px solid #fff;border-radius:2px;background:linear-gradient(to right,#C8D6FB,#BDCCF8 60%,#B6C6F4);box-shadow:0.5px 0.5px 1px #9AA9D0"><svg class="a" style="left:1px;top:2px" width="11" height="10" viewBox="0 0 11 10"><path d="M1.500 3L5.500 7L9.500 3" stroke="#4D6185" stroke-width="2.2" fill="none"/></svg></div>
<div class="a" style="left:546px;top:372px;width:15px;height:18px;border:1px solid #fff;border-radius:2px;background:linear-gradient(to right,#C8D6FB,#BDCCF8 60%,#B6C6F4);box-shadow:0.5px 0.5px 1px #9AA9D0"><svg class="a" style="left:3px;top:4px" width="8" height="8" viewBox="0 0 8 8" shape-rendering="crispEdges"><path d="M0 0h7v1H0ZM0 2h7v1H0ZM0 4h7v1H0ZM0 6h7v1H0Z" fill="#EEF4FE"/><path d="M1 1h7v1H1ZM1 3h7v1H1ZM1 5h7v1H1ZM1 7h7v1H1Z" fill="#8CB0F8"/></svg></div>
<div class="a" style="left:0;top:449px;width:546px;height:16px;background:linear-gradient(to bottom,#F1EFE8,#FAF9F5 30%,#FEFEFB 60%,#FEFEFB)"></div>
<div class="a" style="left:546px;top:449px;width:16px;height:16px;background:#ECE9D8"></div>
<div class="a" style="left:1px;top:450px;width:16px;height:15px;border:1px solid #fff;border-radius:2px;background:#EEECDF;box-shadow:0.5px 0.5px 1px #CFCBBB"><svg class="a" style="left:2px;top:1px" width="10" height="11" viewBox="0 0 10 11"><path d="M7 1.500L3 5.500L7 9.500" stroke="#C9C7BA" stroke-width="2.2" fill="none"/></svg></div>
<div class="a" style="left:529px;top:450px;width:16px;height:15px;border:1px solid #fff;border-radius:2px;background:#EEECDF;box-shadow:0.5px 0.5px 1px #CFCBBB"><svg class="a" style="left:2px;top:1px" width="10" height="11" viewBox="0 0 10 11"><path d="M3 1.500L7 5.500L3 9.500" stroke="#C9C7BA" stroke-width="2.2" fill="none"/></svg></div>
<svg class="a" style="left:549px;top:452px" width="12" height="12" viewBox="0 0 12 12" shape-rendering="crispEdges"><g fill="#fff"><rect x="9" y="1" width="2" height="2"/><rect x="5" y="5" width="2" height="2"/><rect x="9" y="5" width="2" height="2"/><rect x="1" y="9" width="2" height="2"/><rect x="5" y="9" width="2" height="2"/><rect x="9" y="9" width="2" height="2"/></g><g fill="#B8B4A2"><rect x="8" y="0" width="2" height="2"/><rect x="4" y="4" width="2" height="2"/><rect x="8" y="4" width="2" height="2"/><rect x="0" y="8" width="2" height="2"/><rect x="4" y="8" width="2" height="2"/><rect x="8" y="8" width="2" height="2"/></g></svg>
</div>
<svg class="a" style="left:664px;top:16px" width="14" height="22" viewBox="0 0 14 22"><path d="M0.500 0.500V16.800L4 13.300L7.700 20.600L10.700 19.300L7.300 12H11.800Z" fill="#fff" stroke="#000" stroke-width="1.100"/></svg>
</div></body></html>
